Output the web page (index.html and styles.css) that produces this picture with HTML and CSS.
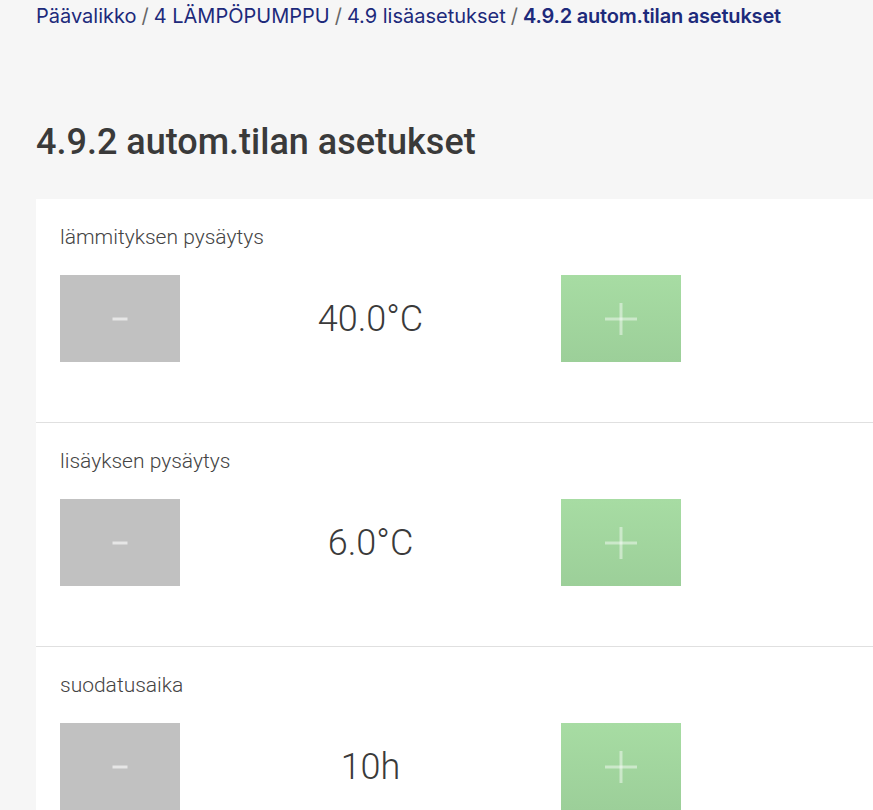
FILE: index.html
```html
<!DOCTYPE html>
<html lang="fi">
<head>
<meta charset="utf-8">
<title>4.9.2 autom.tilan asetukset</title>
<link rel="stylesheet" href="styles.css">
</head>
<body>
<div class="page">
  <nav class="crumbs">
    <a href="#">Päävalikko</a><span class="sep">/</span><a href="#">4 LÄMPÖPUMPPU</a><span class="sep">/</span><a href="#">4.9 lisäasetukset</a><span class="sep">/</span><span class="current">4.9.2 autom.tilan asetukset</span>
  </nav>
  <h1 class="title">4.9.2 autom.tilan asetukset</h1>
  <div class="card">
    <div class="row">
      <div class="label">lämmityksen pysäytys</div>
      <div class="controls">
        <button class="btn minus" type="button"><span class="bar-h"></span></button>
        <div class="value">40.0°C</div>
        <button class="btn plus" type="button"><span class="bar-h"></span><span class="bar-v"></span></button>
      </div>
    </div>
    <div class="row">
      <div class="label">lisäyksen pysäytys</div>
      <div class="controls">
        <button class="btn minus" type="button"><span class="bar-h"></span></button>
        <div class="value">6.0°C</div>
        <button class="btn plus" type="button"><span class="bar-h"></span><span class="bar-v"></span></button>
      </div>
    </div>
    <div class="row">
      <div class="label">suodatusaika</div>
      <div class="controls">
        <button class="btn minus" type="button"><span class="bar-h"></span></button>
        <div class="value">10h</div>
        <button class="btn plus" type="button"><span class="bar-h"></span><span class="bar-v"></span></button>
      </div>
    </div>
  </div>
</div>
</body>
</html>
```
FILE: styles.css
```css
html, body {
  margin: 0;
  padding: 0;
  background: #f6f6f6;
  overflow: hidden;
}
body {
  font-family: Roboto, "Liberation Sans", sans-serif;
  color: #333;
}
.page {
  padding: 4px 0 0 36px;
  width: 1100px;
}
.crumbs {
  font-family: Inter, "Liberation Sans", sans-serif;
  font-size: 20px;
  line-height: 24px;
  color: #1d2a7b;
}
.crumbs a {
  color: #1d2a7b;
  text-decoration: none;
}
.crumbs .sep {
  color: #666;
  margin: 0 5px;
}
.crumbs .current {
  font-weight: 600;
  letter-spacing: -0.2px;
}
.title {
  margin: 94px 0 0 0;
  font-size: 36px;
  line-height: 40px;
  font-weight: 500;
  color: #3a3a3a;
}
.card {
  margin-top: 37px;
  background: #fff;
  width: 1000px;
}
.row {
  padding: 25px 24px 60px 24px;
  border-bottom: 1px solid #e0e0e0;
}
.label {
  font-size: 21px;
  font-weight: 300;
  line-height: 27px;
  color: #444;
}
.controls {
  margin-top: 24px;
  display: flex;
  align-items: center;
  width: 621px;
}
.btn {
  position: relative;
  width: 120px;
  height: 87px;
  border: 0;
  padding: 0;
  flex: none;
}
.minus {
  background: #c1c1c1;
}
.plus {
  background: linear-gradient(#a7dca3, #9ccf99);
}
.bar-h, .bar-v {
  position: absolute;
  left: 50%;
  top: 50%;
  transform: translate(-50%, -50%);
}
.minus .bar-h {
  width: 15px;
  height: 3px;
  background: #e6e6e6;
}
.plus .bar-h {
  width: 32px;
  height: 3px;
  background: rgba(255, 255, 255, 0.45);
}
.plus .bar-v {
  width: 3px;
  height: 32px;
  background: rgba(255, 255, 255, 0.45);
}
.value {
  flex: 1;
  text-align: center;
  font-size: 36px;
  font-weight: 300;
  color: #3a3a3a;
}
```
